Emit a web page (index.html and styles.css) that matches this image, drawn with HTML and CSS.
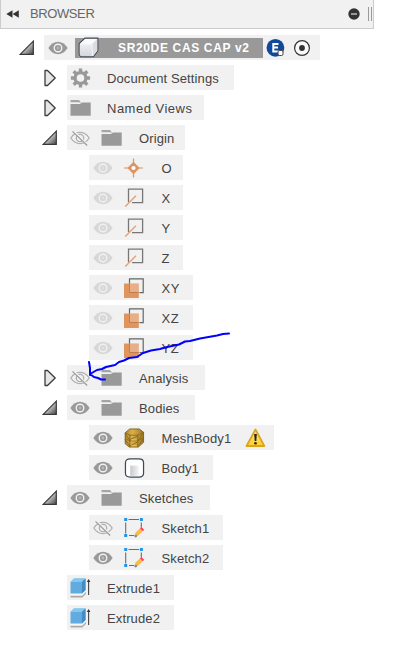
FILE: index.html
```html
<!DOCTYPE html>
<html lang="en">
<head>
<meta charset="utf-8">
<title>Browser</title>
<link rel="stylesheet" href="styles.css">
</head>
<body>
<svg class="defs" width="0" height="0">
  <defs>
    <linearGradient id="g-tri" x1="0" y1="0" x2="1" y2="1"><stop offset=".3" stop-color="#eee"/><stop offset="1" stop-color="#444"/></linearGradient>
    <linearGradient id="g-mesh" x1="0" x2="1"><stop offset="0" stop-color="#b08a30"/><stop offset=".4" stop-color="#dab04a"/><stop offset="1" stop-color="#9d7924"/></linearGradient>
    <linearGradient id="g-warn" x1="0" y1="0" x2="0" y2="1"><stop offset="0" stop-color="#ffe98a"/><stop offset="1" stop-color="#ffce2c"/></linearGradient>
    <linearGradient id="g-body" x1="0" x2="1"><stop offset="0" stop-color="#c8c9d2"/><stop offset="1" stop-color="#f4f4f7"/></linearGradient>
    <linearGradient id="g-box" x1="0" y1="0" x2="0" y2="1"><stop offset="0" stop-color="#eceef3"/><stop offset="1" stop-color="#d5d7df"/></linearGradient>
  </defs>
  <symbol id="open" viewBox="0 0 16 16"><path d="M1.2 14.4 14.3 1.2V14.4Z" fill="url(#g-tri)" stroke="#383838" stroke-width="1.2"/></symbol>
  <symbol id="closed" viewBox="0 0 16 18"><path d="M3 1.5H5.5L13.2 9 5.5 16.5H3Z" fill="#e6e6e6" stroke="#3c3c3c" stroke-width="1.3" stroke-linejoin="round"/></symbol>
  <symbol id="eye" viewBox="0 0 20 20"><path d="M.3 10Q4.5 3.8 10 3.8T19.7 10Q15.5 16.2 10 16.2T.3 10Z" fill="currentColor"/><circle cx="10" cy="10" r="3.8" fill="none" stroke="#f1f1f1" stroke-width="1.4"/><circle cx="10" cy="10" r="1.4" fill="#f1f1f1" opacity=".35"/></symbol>
  <symbol id="eye-off" viewBox="0 0 20 20"><g fill="none" stroke="#b0b0b0" stroke-width="1.3"><path d="M.8 10Q4.5 4.3 10 4.3T19.2 10Q15.5 15.7 10 15.7T.8 10Z"/><circle cx="10" cy="10" r="3.7"/><path d="M3.5 3 18 17.5" stroke="#f1f1f1" stroke-width="2"/><path d="M2.5 3.3 17.2 17.5" stroke="#999" stroke-width="1.1"/></g></symbol>
  <symbol id="folder" viewBox="0 0 21 20"><path d="M.5 6H9.8L12 4.5H20.7V17.7H.5Z" fill="#999"/><path d="M.5 2H9L11 4.6H9.3L8.7 4.3H.5Z" fill="#a5a5a5"/></symbol>
  <symbol id="gear" viewBox="0 0 20 20"><g stroke="#999" stroke-width="3.4"><path d="M10 .4V19.6M.4 10H19.6M3.2 3.2 16.8 16.8M16.8 3.2 3.2 16.8"/></g><circle cx="10" cy="10" r="7.1" fill="#999"/><circle cx="10" cy="10" r="3.8" fill="#f1f1f1"/></symbol>
  <symbol id="point" viewBox="0 0 21 20"><path d="M9.5 .5V19.5M0 10H19" stroke="#de9460" stroke-width="1.2"/><path d="M9.5 3.8 15.7 10 9.5 16.2 3.3 10Z" fill="#de9460"/><circle cx="9.5" cy="10" r="2.1" fill="#fff"/></symbol>
  <symbol id="axis" viewBox="0 0 21 20"><path d="M4.5 14V1.1H18.6V14.7H8" fill="none" stroke="#777" stroke-width="1.3"/><path d="M1.2 18.5 12 7.7" stroke="#eaa172" stroke-width="1.5"/></symbol>
  <symbol id="plane" viewBox="0 0 21 20"><path d="M0 5.5H14.8V20H0Z" fill="#e0955f"/><path d="M5.5 5.5H14.8V14H5.5Z" fill="#fff" opacity=".25"/><path d="M5.5 5.5V.9H19.2V14.7H15.5" fill="none" stroke="#666" stroke-width="1.2"/><path d="M5.5 5V14.5H14.8" fill="none" stroke="#bb7a4e" stroke-width=".9"/></symbol>
  <symbol id="box" viewBox="0 0 23 22"><path d="M1.2 7 7.3 1.2H20.8V14.5L16 20.7H3L1.2 18.5Z" fill="#fafafa" stroke="#414750" stroke-width="1.1"/><path d="M2 7.5H14.5V20H3L2 18.5Z" fill="url(#g-box)"/><path d="M15 7 20 2V14.3L15.5 19.8Z" fill="#dadce1"/></symbol>
  <symbol id="mesh" viewBox="0 0 21 21"><path d="M.7 5 5.5 1H15.5L20 4.5V15L14.5 20H5L.7 16.5Z" fill="url(#g-mesh)" stroke="#795a12" stroke-width=".9"/><path d="M.7 5 5.5 7.5H14L20 4.5M5.5 7.5V20M14 7.5V20M5.5 13.5H14L20 10M.7 11 5.5 13.5M5.5 12 14 8.5M5.5 19 14 14.5M14 13.5 20 5M14 19 20 11M.7 6 5.5 13M.7 12 5.5 19" fill="none" stroke="#80601a" stroke-width=".8"/><path d="M7 12.6H13M7 18.6H13" stroke="#edca69" stroke-width=".8"/></symbol>
  <symbol id="body" viewBox="0 0 21 21"><path d="M1 5Q1 1 6 1H15Q20 1 20 5V16Q20 20 15 20H6Q1 20 1 16Z" fill="#fff" stroke="#3e4856" stroke-width="1.3"/><path d="M6 8H15V18.7H6Z" fill="url(#g-body)"/></symbol>
  <symbol id="sketch" viewBox="0 0 21 20"><path d="M4.5 1.5H15M1.7 4.5V15.5M17.3 4.5V10M5 17.5H10" stroke="#6d6d6d" stroke-width="1.1"/><g fill="#2393e8"><path d="M.2 0H3.2V3H.2ZM15.9 0H18.9V3H15.9ZM.2 16H3.2V19H.2Z"/></g><path d="M10.8 15.2 15.6 10.7 18.4 13.8 13.5 18.3Z" fill="#f8bd45"/><path d="M16.3 10.6 17.6 9.5 19.7 11.8 18.5 13Z" fill="#f84d5c" stroke="#f84d5c" stroke-linejoin="round"/><circle cx="11.7" cy="18" r="1.4" fill="#888"/></symbol>
  <symbol id="extrude" viewBox="0 0 21 20"><path d="M.5 17.5H12L16 13.5V15.7L12.3 19.6H.5Z" fill="#aaa"/><path d="M.5 15.7H12L16 12V13.7L12.3 17.5H.5Z" fill="#f8f8f8"/><path d="M.5 4 4 .5H15.5V12L12 15.5H.5Z" fill="#62abdf"/><path d="M.5 4 4 .5H15.5L12 4Z" fill="#84c7ef"/><path d="M12 4 15.5 .5V12L12 15.5Z" fill="#438bc3"/><path d="M18.6 3V17" stroke="#444" stroke-width="1.1"/><path d="M16.8 4 18.6 1 20.4 4Z" fill="#333"/></symbol>
  <symbol id="warning" viewBox="0 0 21 20"><path d="M10.5 1.5 19.3 18H1.5Z" fill="url(#g-warn)" stroke="#dba61d" stroke-width="1.8" stroke-linejoin="round"/><path d="M9.2 6H11.8L11.3 13H9.7Z" fill="#222"/><circle cx="10.5" cy="15.3" r="1.3" fill="#222"/></symbol>
</svg>

<header class="header">
  <svg class="collapse" viewBox="0 0 13 8"><path d="M6.5 .3V7.7L.3 4ZM12.8 .3V7.7L6.6 4Z" fill="#333"/></svg>
  <span class="title">BROWSER</span>
  <svg class="minus" viewBox="0 0 12 12"><circle cx="6" cy="6" r="5.7" fill="#333"/><path d="M3 6H9" stroke="#ddd" stroke-width="1.2"/></svg>
  <span class="grip"></span>
</header>

<main class="tree">
  <div class="row root">
    <svg class="toggle"><use href="#open"/></svg>
    <div class="item root-item">
      <svg class="icon on"><use href="#eye"/></svg>
      <div class="selected"><svg class="box"><use href="#box"/></svg><span>SR20DE CAS CAP v2</span></div>
      <svg class="edition" viewBox="0 0 20 20"><circle cx="9.4" cy="9.8" r="8.9" fill="#10499b"/><path d="M12.5 5.9H7.3V13.5H12.5M7.3 9.6H12" fill="none" stroke="#fff" stroke-width="2"/><rect x="12" y="12.5" width="5" height="5" rx="1.4" fill="#fff" stroke="#444"/></svg>
      <svg class="active" viewBox="0 0 18 18"><circle cx="9" cy="9" r="7.4" fill="#fafafa" stroke="#333" stroke-width="1.2"/><circle cx="9" cy="9" r="2.9" fill="#333"/></svg>
    </div>
  </div>
  <div class="row"><svg class="toggle closed"><use href="#closed"/></svg><div class="item single w-settings"><svg class="icon"><use href="#gear"/></svg><span>Document Settings</span></div></div>
  <div class="row"><svg class="toggle closed"><use href="#closed"/></svg><div class="item single w-views"><svg class="icon"><use href="#folder"/></svg><span>Named Views</span></div></div>
  <div class="row"><svg class="toggle"><use href="#open"/></svg><div class="item w-origin"><svg class="icon"><use href="#eye-off"/></svg><svg class="kind"><use href="#folder"/></svg><span>Origin</span></div></div>
  <div class="row child"><div class="item w-axis"><svg class="icon dim"><use href="#eye"/></svg><svg class="kind"><use href="#point"/></svg><span>O</span></div></div>
  <div class="row child"><div class="item w-axis"><svg class="icon dim"><use href="#eye"/></svg><svg class="kind"><use href="#axis"/></svg><span>X</span></div></div>
  <div class="row child"><div class="item w-axis"><svg class="icon dim"><use href="#eye"/></svg><svg class="kind"><use href="#axis"/></svg><span>Y</span></div></div>
  <div class="row child"><div class="item w-axis"><svg class="icon dim"><use href="#eye"/></svg><svg class="kind"><use href="#axis"/></svg><span>Z</span></div></div>
  <div class="row child"><div class="item w-plane"><svg class="icon dim"><use href="#eye"/></svg><svg class="kind"><use href="#plane"/></svg><span>XY</span></div></div>
  <div class="row child"><div class="item w-plane"><svg class="icon dim"><use href="#eye"/></svg><svg class="kind"><use href="#plane"/></svg><span>XZ</span></div></div>
  <div class="row child"><div class="item w-plane"><svg class="icon dim"><use href="#eye"/></svg><svg class="kind"><use href="#plane"/></svg><span>YZ</span></div></div>
  <div class="row"><svg class="toggle closed"><use href="#closed"/></svg><div class="item w-analysis"><svg class="icon"><use href="#eye-off"/></svg><svg class="kind"><use href="#folder"/></svg><span>Analysis</span></div></div>
  <div class="row"><svg class="toggle"><use href="#open"/></svg><div class="item w-bodies"><svg class="icon on"><use href="#eye"/></svg><svg class="kind"><use href="#folder"/></svg><span>Bodies</span></div></div>
  <div class="row child"><div class="item w-mesh"><svg class="icon on"><use href="#eye"/></svg><svg class="kind"><use href="#mesh"/></svg><span>MeshBody1</span><svg class="warning"><use href="#warning"/></svg></div></div>
  <div class="row child"><div class="item w-body"><svg class="icon on"><use href="#eye"/></svg><svg class="kind"><use href="#body"/></svg><span>Body1</span></div></div>
  <div class="row"><svg class="toggle"><use href="#open"/></svg><div class="item w-sketches"><svg class="icon on"><use href="#eye"/></svg><svg class="kind"><use href="#folder"/></svg><span>Sketches</span></div></div>
  <div class="row child"><div class="item w-sketch"><svg class="icon"><use href="#eye-off"/></svg><svg class="kind"><use href="#sketch"/></svg><span>Sketch1</span></div></div>
  <div class="row child"><div class="item w-sketch"><svg class="icon on"><use href="#eye"/></svg><svg class="kind"><use href="#sketch"/></svg><span>Sketch2</span></div></div>
  <div class="row leaf"><div class="item single w-extrude"><svg class="icon"><use href="#extrude"/></svg><span>Extrude1</span></div></div>
  <div class="row leaf"><div class="item single w-extrude"><svg class="icon"><use href="#extrude"/></svg><span>Extrude2</span></div></div>
</main>

<svg class="annotation" viewBox="0 0 414 653"><path d="M229 333.5 223 334 217 335.5 200 338.5 190 341 185 341.5 179 344.5 172 346 165 347.5 160 349 151 350.5 143 353 137 357 129 358 124 360.5 119 362 115 365 106 367 102 369 97 370 90 374 94 377 98 378 101 379.5 105 379.5M90 375V368L89 362" /></svg>
</body>
</html>
```
FILE: styles.css
```css
* { box-sizing: border-box; }

body {
  margin: 0;
  width: 414px;
  height: 653px;
  overflow: hidden;
  background: #fff;
  color: #444;
  font: 13px/25px "Liberation Sans", Arial, sans-serif;
}

svg { display: block; flex: none; }
.defs { position: absolute; }

.header {
  display: flex;
  align-items: center;
  width: 374px;
  height: 29px;
  padding: 0 0 1px 5px;
  background: #f1f1f1;
  border: solid #ccc;
  border-width: 0 1px 1px;
  color: #666;
}
.collapse { width: 13px; height: 8px; }
.title { margin-left: 11px; letter-spacing: -0.4px; }
.minus { width: 12px; height: 12px; margin-left: auto; }
.grip {
  width: 4px;
  height: 14px;
  margin: 0 1px 0 8px;
  border: solid #999;
  border-width: 0 1px;
}

.tree {
  display: flex;
  flex-direction: column;
  gap: 5px;
  padding-top: 6px;
}
.row { display: flex; align-items: center; height: 25px; padding-left: 42px; }
.root { padding-left: 19px; }
.child { padding-left: 89px; }
.leaf { padding-left: 67px; }
.toggle { width: 16px; height: 16px; margin-right: 9px; }
.toggle.closed { height: 18px; }

.item {
  display: flex;
  align-items: center;
  height: 25px;
  padding-left: 3px;
  background: #f1f1f1;
  white-space: nowrap;
}
.item span { padding-top: 1px; letter-spacing: 0.12px; }
.icon { width: 20px; height: 20px; }
.on { color: #999; }
.dim { color: #d7d7d7; }
.kind { width: 21px; height: 20px; margin: 0 17px 0 11px; }
.single .icon { width: 21px; margin-right: 16px; }
.child .item { padding-left: 4px; }
.child .kind { margin-right: 16.5px; }

.item.root-item { width: 276px; padding-left: 4px; }
.selected {
  display: flex;
  align-items: center;
  width: 188px;
  height: 20px;
  margin-left: 7px;
  padding-left: 3px;
  background: #999;
  color: #fff;
  font-weight: bold;
  font-size: 12px;
}
.item .selected span { letter-spacing: 0.65px; }
.box { width: 22px; height: 21px; margin-right: 18px; }
.edition { width: 20px; height: 20px; margin-left: 3px; }
.active { width: 18px; height: 18px; margin-left: 7px; }
.warning { width: 21px; height: 20px; margin-left: 14px; }

.w-settings { width: 167px; }
.w-views { width: 137px; }
.w-views span { letter-spacing: 0.5px; }
.w-origin { width: 118px; }
.w-axis { width: 94px; }
.w-plane { width: 104px; }
.w-plane span { letter-spacing: 0.6px; }
.w-analysis { width: 138px; }
.w-bodies { width: 128px; }
.w-mesh { width: 185px; }
.w-body { width: 124px; }
.w-sketches { width: 143px; }
.w-sketch { width: 134px; }
.w-extrude { width: 107px; }

.annotation {
  position: absolute;
  top: 0;
  left: 0;
  width: 414px;
  height: 653px;
  fill: none;
  stroke: #00f;
  stroke-width: 2;
  stroke-linecap: round;
  stroke-linejoin: round;
}
```
